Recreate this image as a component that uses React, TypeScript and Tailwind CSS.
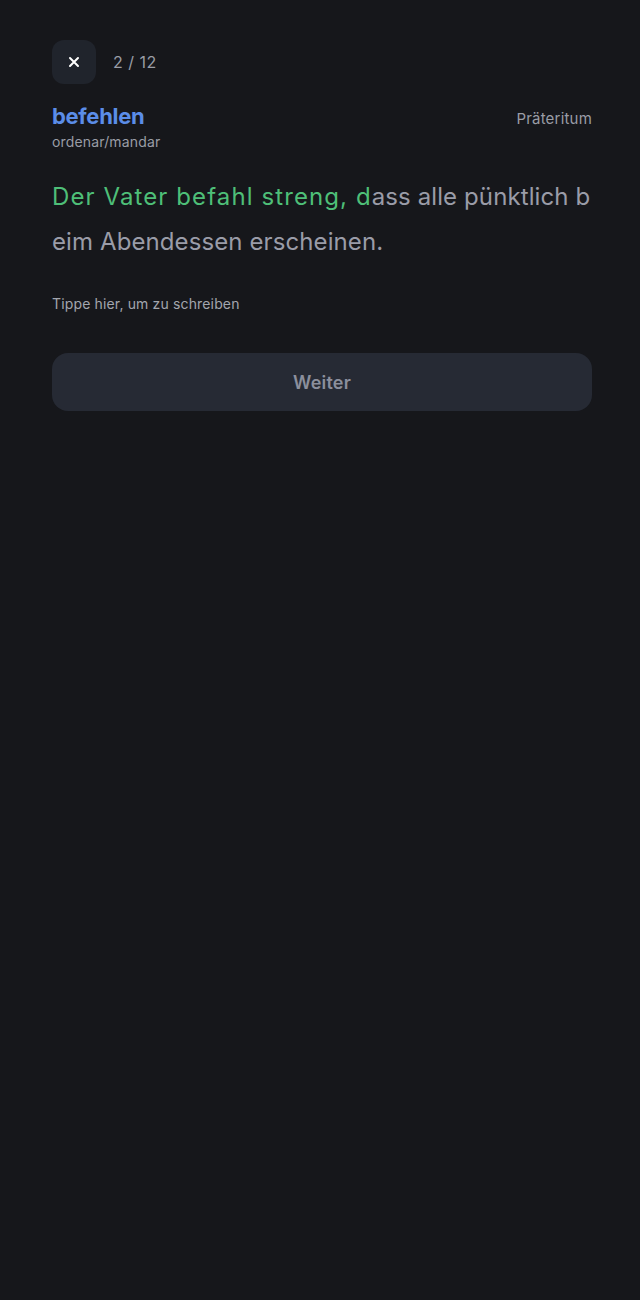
export default function App() {
  return (
    <div
      className="min-h-screen w-full bg-[#16171b] pl-[52px] pr-[48px] pt-10"
      style={{ fontFamily: "Inter, 'Noto Sans', sans-serif" }}
    >
      {/* top bar */}
      <div className="flex items-center gap-[17px]">
        <button className="flex h-11 w-11 items-center justify-center rounded-xl bg-[#20242c] text-white">
          <svg width="12" height="12" viewBox="0 0 12 12" fill="none">
            <path d="M2 2L10 10M10 2L2 10" stroke="white" strokeWidth="2" strokeLinecap="round" />
          </svg>
        </button>
        <span className="text-[16px] tracking-[0.5px] text-[#9a9da6]">2 / 12</span>
      </div>

      {/* word header */}
      <div className="mt-[18px] flex items-start justify-between">
        <div>
          <h1 className="text-[22px] font-bold leading-7 tracking-[-0.3px] text-[#5b8de8]">befehlen</h1>
          <p className="mt-0.5 text-[14px] leading-5 tracking-[0.15px] text-[#9a9da6]">ordenar/mandar</p>
        </div>
        <span className="pt-1.5 text-[15px] tracking-[0.2px] text-[#9a9da6]">Präteritum</span>
      </div>

      {/* sentence */}
      <p className="mt-[22px] break-all text-[24px] leading-[45px] tracking-[0.1px] text-[#9a9ca8]">
        <span className="tracking-[1.1px] text-[#4ebf78]">Der Vater befahl streng, d</span>
        ass alle pünktlich beim Abendessen erscheinen.
      </p>

      <p className="mt-[30px] text-[14px] leading-5 tracking-[0.15px] text-[#a3a6ae]">Tippe hier, um zu schreiben</p>

      <button className="mt-[39px] flex h-[58px] w-full items-center justify-center rounded-2xl bg-[#262a34] text-[18px] font-semibold tracking-[0.2px] text-[#8b8f9c]">
        Weiter
      </button>
    </div>
  );
}
